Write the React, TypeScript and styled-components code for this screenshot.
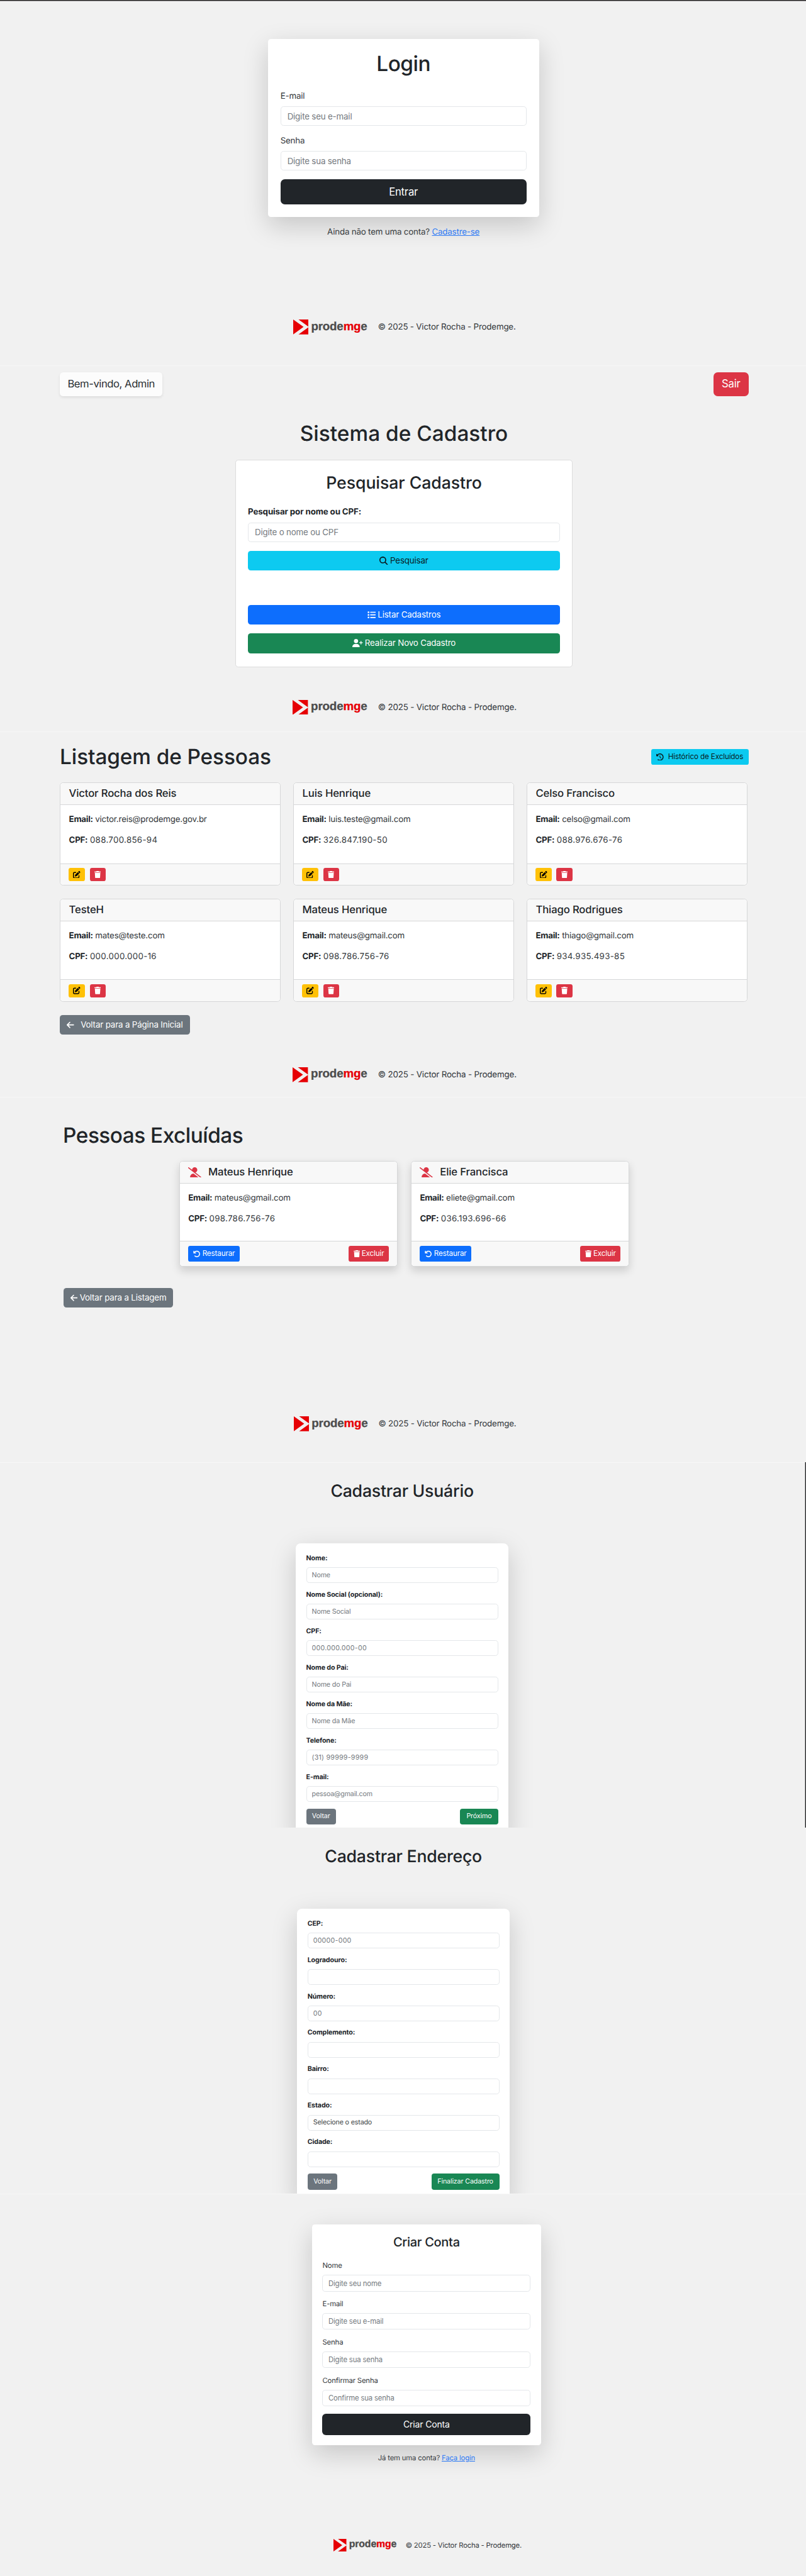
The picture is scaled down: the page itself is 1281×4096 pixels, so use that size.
import React from 'react';
import styled, { createGlobalStyle, css } from 'styled-components';
import {
  FaMagnifyingGlass,
  FaList,
  FaUserPlus,
  FaPenToSquare,
  FaTrash,
  FaArrowLeft,
  FaClockRotateLeft,
  FaArrowRotateLeft,
  FaUserSlash,
} from 'react-icons/fa6';

/* Design units to CSS pixels. */
const u = (n: number) => `${(n * 0.6674).toFixed(2)}px`;

const Global = createGlobalStyle`
  *, *::before, *::after { box-sizing: border-box; }
  body {
    margin: 0;
    background: #f1f1f1;
    color: #212529;
    font-family: Inter, "Liberation Sans", sans-serif;
    font-size: ${u(20)};
    line-height: ${u(30)};
    letter-spacing: -0.0145em;
    text-rendering: geometricPrecision;
  }
  p, h1, h2, h3 { margin: 0; }
`;

const Page = styled.main`
  width: 1281px;
  height: 4096px;
  overflow: hidden;
  background: #f1f1f1;
`;

const Screen = styled.section<{
  $height?: number;
  $top?: number;
  $left?: number;
  $right?: number;
  $seam?: boolean;
  $edge?: 'top' | 'right';
}>`
  display: flex;
  flex-direction: column;
  height: ${(p) => u(p.$height ?? 871)};
  padding: ${(p) => `${u(p.$top ?? 0)} ${u(p.$right ?? 0)} 0 ${u(p.$left ?? 0)}`};
  overflow: hidden;
  ${(p) => p.$seam && css`box-shadow: inset 0 1px 0 #f7f7f7;`}
  ${(p) => p.$edge === 'top' && css`box-shadow: inset 0 1.6px 0 #221f20;`}
  ${(p) =>
    p.$edge === 'right' &&
    css`box-shadow: inset -1.4px 0 0 #252628, inset 0 1px 0 #f7f7f7;`}
`;

const Title = styled.h1<{ $size?: number; $ls?: number; $mb?: number; $center?: boolean }>`
  font-weight: 450;
  font-size: ${(p) => u(p.$size ?? 50)};
  line-height: 1.2;
  letter-spacing: ${(p) => p.$ls ?? -0.003}em;
  margin-bottom: ${(p) => u(p.$mb ?? 0)};
  text-align: ${(p) => (p.$center ? 'center' : 'left')};
  white-space: nowrap;
`;

/* ---------- Forms ---------- */

const FormCard = styled.form<{
  $w: number;
  $h: number;
  $fs: number;
  $label: number;
  $input: number;
  $gap: number;
  $pad: string;
  $radius?: number;
  $outlined?: boolean;
}>`
  --fs: ${(p) => u(p.$fs)};
  --label: ${(p) => u(p.$label)};
  --input: ${(p) => u(p.$input)};
  --gap: ${(p) => u(p.$gap)};
  display: flex;
  flex-direction: column;
  flex: none;
  align-self: center;
  width: ${(p) => u(p.$w)};
  height: ${(p) => u(p.$h)};
  padding: ${(p) => p.$pad};
  background: #fff;
  border-radius: ${(p) => u(p.$radius ?? 7)};
  font-size: var(--fs);
  ${(p) =>
    p.$outlined
      ? css`border: 1px solid #dcdcdd;`
      : css`box-shadow: 0 ${u(20)} ${u(60)} rgba(0, 0, 0, 0.175);`}
`;

const Field = styled.div`
  display: flex;
  flex-direction: column;
  gap: ${u(9.3)};
  margin-bottom: var(--gap);
`;

const Label = styled.label<{ $bold?: boolean }>`
  height: var(--label);
  line-height: var(--label);
  font-weight: ${(p) => (p.$bold ? 700 : 400)};
  color: ${(p) => (p.$bold ? '#212529' : '#32363a')};
  letter-spacing: ${(p) => (p.$bold ? '-0.010em' : '-0.0145em')};
`;

const control = css`
  display: block;
  width: 100%;
  height: var(--input);
  margin: 0;
  padding: 0 ${u(15)};
  padding-left: 0.75em;
  background: #fff;
  border: 1px solid #e4e7ea;
  border-radius: ${u(7)};
  font: inherit;
  font-size: var(--fs);
  color: #3b3f43;
`;

const Input = styled.input<{ $digits?: boolean }>`
  ${control}
  letter-spacing: ${(p) => (p.$digits ? '0.022em' : '-0.0145em')};
  &::placeholder { color: #74797e; opacity: 1; }
`;

const Select = styled.select`
  ${control}
  appearance: none;
  letter-spacing: -0.0145em;
`;

const FormActions = styled.div`
  display: flex;
  justify-content: space-between;
`;

/* ---------- Buttons ---------- */

const tones = {
  dark: ['#212529', '#fff'],
  danger: ['#dc3545', '#fff'],
  info: ['#0dcaf0', '#0a1a1e'],
  primary: ['#0d6efd', '#fff'],
  success: ['#198754', '#fff'],
  secondary: ['#6c757d', '#fff'],
  warning: ['#ffc107', '#000'],
};

const Button = styled.button<{
  $tone: keyof typeof tones;
  $h: number;
  $w?: number;
  $fs?: number;
  $gap?: number;
  $mb?: number;
  $radius?: number;
  $icon?: number;
}>`
  display: inline-flex;
  flex: none;
  align-items: center;
  justify-content: center;
  gap: ${(p) => u(p.$gap ?? 5)};
  width: ${(p) => (p.$w ? u(p.$w) : '100%')};
  height: ${(p) => u(p.$h)};
  margin: 0 0 ${(p) => u(p.$mb ?? 0)};
  padding: 0;
  border: 0;
  border-radius: ${(p) => u(p.$radius ?? 7)};
  background: ${(p) => tones[p.$tone][0]};
  color: ${(p) => tones[p.$tone][1]};
  font-family: inherit;
  font-size: ${(p) => u(p.$fs ?? 20)};
  letter-spacing: -0.012em;
  line-height: 1;
  white-space: nowrap;
  svg { width: ${(p) => p.$icon ?? 1}em; height: 1em; flex: none; }
`;

const Hint = styled.p<{ $fs: number; $top: number }>`
  margin-top: ${(p) => u(p.$top)};
  font-size: ${(p) => u(p.$fs)};
  line-height: 1.5;
  text-align: center;
  color: #383c40;
`;

const Link = styled.a`
  color: #2f7bf5;
  text-decoration: underline;
`;

/* ---------- Footer ---------- */

const FooterBar = styled.footer<{ $left: number; $bottom: number; $scale: number }>`
  --k: ${(p) => p.$scale};
  display: flex;
  align-items: center;
  height: ${u(40)};
  margin-top: auto;
  margin-bottom: ${(p) => u(p.$bottom)};
  padding-left: ${(p) => u(p.$left)};
  white-space: nowrap;
`;

const Mark = styled.svg`
  flex: none;
  width: calc(${u(36.3)} * var(--k));
  height: calc(${u(35.4)} * var(--k));
  margin-right: calc(${u(6.8)} * var(--k));
`;

const Brand = styled.span`
  width: calc(${u(159.2)} * var(--k));
  padding-bottom: ${u(3)};
  font: 700 calc(${u(28)} * var(--k)) / 1 "Liberation Sans", sans-serif;
  letter-spacing: -0.008em;
  color: #4d4d4d;
  -webkit-text-stroke: 0.3px currentColor;
  em { font-style: normal; color: #e60005; }
`;

const Copy = styled.span`
  font-size: calc(${u(20)} * var(--k));
  color: #33373b;
`;

function Footer({ left, bottom, scale = 1 }: { left: number; bottom: number; scale?: number }) {
  return (
    <FooterBar $left={left} $bottom={bottom} $scale={scale}>
      <Mark viewBox="0 0 109 106" preserveAspectRatio="none" fill="#e60005">
        <polygon points="0,0 74,53 0,106" />
        <polygon points="38,0 109,0 109,51" />
        <polygon points="38,106 109,106 109,55" />
      </Mark>
      <Brand>prode<em>mg</em>e</Brand>
      <Copy>© 2025 - Victor Rocha - Prodemge.</Copy>
    </FooterBar>
  );
}

/* ---------- Home ---------- */

const Bar = styled.div<{ $mb: number; $h: number }>`
  display: flex;
  align-items: center;
  justify-content: space-between;
  height: ${(p) => u(p.$h)};
  margin: 0 ${u(137)} ${(p) => u(p.$mb)} ${u(142.5)};
`;

const Welcome = styled.div`
  display: flex;
  align-items: center;
  justify-content: center;
  width: ${u(244.5)};
  height: 100%;
  border-radius: ${u(8)};
  background: #fcfcfc;
  box-shadow: 0 ${u(3)} ${u(6)} rgba(0, 0, 0, 0.09);
  font-size: ${u(25)};
  letter-spacing: -0.028em;
  color: #2b2f33;
`;

const Centered = styled.div<{ $shift?: number }>`
  display: flex;
  flex-direction: column;
  padding-left: ${(p) => u(p.$shift ?? 0)};
`;

/* ---------- People ---------- */

const Cards = styled.div<{ $cols: number; $w: number; $left: number; $gapX: number; $gapY: number; $h: number }>`
  display: grid;
  grid-template-columns: repeat(${(p) => p.$cols}, ${(p) => u(p.$w)});
  grid-auto-rows: ${(p) => u(p.$h)};
  column-gap: ${(p) => u(p.$gapX)};
  row-gap: ${(p) => u(p.$gapY)};
  margin-left: ${(p) => u(p.$left)};
`;

const Card = styled.article<{ $raised?: boolean }>`
  display: flex;
  flex-direction: column;
  border: 1px solid #d6d7d8;
  border-radius: ${u(8)};
  background: #fff;
  overflow: hidden;
  ${(p) => p.$raised && css`box-shadow: 0 ${u(10)} ${u(20)} rgba(0, 0, 0, 0.15);`}
`;

const CardHead = styled.h3`
  display: flex;
  align-items: center;
  gap: ${u(16.5)};
  height: ${u(51.5)};
  padding: 0 ${u(19.8)};
  border-bottom: 1px solid #d6d7d8;
  background: #f8f8f8;
  font-weight: 450;
  font-size: ${u(25)};
  letter-spacing: -0.008em;
  svg { flex: none; width: 1.25em; height: 1em; color: #dc3545; }
`;

const CardBody = styled.div`
  display: flex;
  flex: 1;
  flex-direction: column;
  gap: ${u(20)};
  padding: ${u(20)} ${u(19.8)} 0;
  color: #33373b;
  b { color: #212529; letter-spacing: -0.02em; }
`;

const Digits = styled.span`
  letter-spacing: 0.022em;
`;

const CardFoot = styled.div<{ $h: number; $spread?: boolean }>`
  display: flex;
  align-items: center;
  justify-content: ${(p) => (p.$spread ? 'space-between' : 'flex-start')};
  gap: ${u(11)};
  height: ${(p) => u(p.$h)};
  padding: 0 ${u(19.5)};
  border-top: 1px solid #d6d7d8;
  background: #f8f8f8;
`;

const BackRow = styled.div<{ $left: number; $top: number }>`
  margin: ${(p) => `${u(p.$top)} 0 0 ${u(p.$left)}`};
`;

const people = [
  ['Victor Rocha dos Reis', 'victor.reis@prodemge.gov.br', '088.700.856-94'],
  ['Luis Henrique', 'luis.teste@gmail.com', '326.847.190-50'],
  ['Celso Francisco', 'celso@gmail.com', '088.976.676-76'],
  ['TesteH', 'mates@teste.com', '000.000.000-16'],
  ['Mateus Henrique', 'mateus@gmail.com', '098.786.756-76'],
  ['Thiago Rodrigues', 'thiago@gmail.com', '934.935.493-85'],
];

const removed = [
  ['Mateus Henrique', 'mateus@gmail.com', '098.786.756-76'],
  ['Elie Francisca', 'eliete@gmail.com', '036.193.696-66'],
];

const userFields: [string, string, boolean?][] = [
  ['Nome:', 'Nome'],
  ['Nome Social (opcional):', 'Nome Social'],
  ['CPF:', '000.000.000-00', true],
  ['Nome do Pai:', 'Nome do Pai'],
  ['Nome da Mãe:', 'Nome da Mãe'],
  ['Telefone:', '(31) 99999-9999', true],
  ['E-mail:', 'pessoa@gmail.com'],
];

const addressFields: [string, string, boolean?][] = [
  ['CEP:', '00000-000', true],
  ['Logradouro:', ''],
  ['Número:', '00', true],
  ['Complemento:', ''],
  ['Bairro:', ''],
  ['Estado:', 'Selecione o estado'],
  ['Cidade:', ''],
];

const accountFields = [
  ['Nome', 'Digite seu nome'],
  ['E-mail', 'Digite seu e-mail'],
  ['Senha', 'Digite sua senha'],
  ['Confirmar Senha', 'Confirme sua senha'],
];

function PersonInfo({ email, cpf }: { email: string; cpf: string }) {
  return (
    <CardBody>
      <p><b>Email:</b> {email}</p>
      <p><b>CPF:</b> <Digits>{cpf}</Digits></p>
    </CardBody>
  );
}

export default function App() {
  return (
    <Page>
      <Global />

      <Screen $top={93} $left={2} $edge="top">
        <FormCard $w={645.5} $h={424} $fs={20} $label={30} $input={47} $gap={20.5} $pad={`${u(30)} ${u(29.8)}`}>
          <Title $center $mb={30.7} $ls={-0.014}>Login</Title>
          <Field>
            <Label>E-mail</Label>
            <Input placeholder="Digite seu e-mail" />
          </Field>
          <Field>
            <Label>Senha</Label>
            <Input placeholder="Digite sua senha" />
          </Field>
          <Button type="button" $tone="dark" $h={60} $fs={25} $radius={10}>Entrar</Button>
        </FormCard>
        <Hint $fs={20} $top={21}>Ainda não tem uma conta? <Link>Cadastre-se</Link></Hint>
        <Footer left={695.8} bottom={72} />
      </Screen>

      <Screen $top={15.3} $seam>
        <Bar $h={57} $mb={61}>
          <Welcome>Bem-vindo, Admin</Welcome>
          <Button $tone="danger" $w={83} $h={57} $fs={25} $radius={10}>Sair</Button>
        </Bar>
        <Centered $shift={4.5}>
          <Title $center $mb={30.7} $ls={0.001}>Sistema de Cadastro</Title>
          <FormCard $outlined $w={803} $h={494.5} $fs={20} $label={30} $input={47} $gap={20.5} $pad={`${u(30)} ${u(28.5)}`}>
            <Title as="h2" $size={40} $center $mb={30.7}>Pesquisar Cadastro</Title>
            <Field>
              <Label $bold>Pesquisar por nome ou CPF:</Label>
              <Input placeholder="Digite o nome ou CPF" />
            </Field>
            <Button type="button" $tone="info" $h={47.4} $mb={81.6}><FaMagnifyingGlass /> Pesquisar</Button>
            <Button type="button" $tone="primary" $h={47.4} $mb={20.6}><FaList /> Listar Cadastros</Button>
            <Button type="button" $tone="success" $h={47.4} $icon={1.25}><FaUserPlus /> Realizar Novo Cadastro</Button>
          </FormCard>
        </Centered>
        <Footer left={697} bottom={37} scale={1.005} />
      </Screen>

      <Screen $top={31.5} $seam>
        <Bar $h={60} $mb={31}>
          <Title>Listagem de Pessoas</Title>
          <Button $tone="info" $w={231.5} $h={38.4} $fs={17.5} $gap={10} $radius={5}>
            <FaClockRotateLeft /> Histórico de Excluídos
          </Button>
        </Bar>
        <Cards $cols={3} $w={525.3} $left={142.9} $gapX={30.5} $gapY={31.3} $h={245.7}>
          {people.map(([name, email, cpf]) => (
            <Card key={name}>
              <CardHead>{name}</CardHead>
              <PersonInfo email={email} cpf={cpf} />
              <CardFoot $h={52}>
                <Button $tone="warning" $w={38.8} $h={30.7} $fs={17.5} $radius={5} aria-label="Editar"><FaPenToSquare /></Button>
                <Button $tone="danger" $w={37.6} $h={30.7} $fs={17.5} $radius={5} $icon={0.875} aria-label="Remover"><FaTrash /></Button>
              </CardFoot>
            </Card>
          ))}
        </Cards>
        <BackRow $left={142.9} $top={30.7}>
          <Button $tone="secondary" $w={309} $h={47.7} $gap={15} $icon={0.875}><FaArrowLeft /> Voltar para a Página Inicial</Button>
        </BackRow>
        <Footer left={697} bottom={32.5} scale={1.005} />
      </Screen>

      <Screen $top={62.5} $seam>
        <BackRow $left={150} $top={0}>
          <Title $mb={31} $ls={-0.015}>Pessoas Excluídas</Title>
        </BackRow>
        <Cards $cols={2} $w={520} $left={427} $gapX={31.7} $gapY={0} $h={251}>
          {removed.map(([name, email, cpf]) => (
            <Card key={name} $raised>
              <CardHead><FaUserSlash /> {name}</CardHead>
              <PersonInfo email={email} cpf={cpf} />
              <CardFoot $h={59} $spread>
                <Button $tone="primary" $w={123} $h={38} $fs={17.5} $radius={5}><FaArrowRotateLeft /> Restaurar</Button>
                <Button $tone="danger" $w={95.5} $h={38} $fs={17.5} $radius={5} $gap={4} $icon={0.875}><FaTrash /> Excluir</Button>
              </CardFoot>
            </Card>
          ))}
        </Cards>
        <BackRow $left={150.8} $top={51}>
          <Button $tone="secondary" $w={262} $h={47} $icon={0.875}><FaArrowLeft /> Voltar para a Listagem</Button>
        </BackRow>
        <Footer left={699} bottom={71.5} />
      </Screen>

      <Screen $top={44.4} $right={4.3} $seam $edge="right">
        <Title $size={40} $center $mb={100.3} $ls={-0.009}>Cadastrar Usuário</Title>
        <FormCard $w={505.3} $h={700} $fs={16} $label={24} $input={37.5} $gap={16.2} $radius={12} $pad={`${u(24)} ${u(24.1)}`}>
          {userFields.map(([label, hint, digits]) => (
            <Field key={label}>
              <Label $bold>{label}</Label>
              <Input placeholder={hint} $digits={digits} />
            </Field>
          ))}
          <FormActions>
            <Button type="button" $tone="secondary" $w={71} $h={38} $fs={16} $radius={6}>Voltar</Button>
            <Button type="button" $tone="success" $w={90.5} $h={38} $fs={16} $radius={6}>Próximo</Button>
          </FormActions>
        </FormCard>
      </Screen>

      <Screen $top={44.4} $left={2}>
        <Title $size={40} $center $mb={99.5} $ls={-0.009}>Cadastrar Endereço</Title>
        <FormCard $w={505.9} $h={700} $fs={16} $label={24} $input={37.8} $gap={15.8} $radius={12} $pad={`${u(24)} ${u(24.5)}`}>
          {addressFields.map(([label, hint, digits]) => (
            <Field key={label}>
              <Label $bold>{label}</Label>
              {label === 'Estado:' ? (
                <Select><option>{hint}</option></Select>
              ) : (
                <Input placeholder={hint} $digits={digits} />
              )}
            </Field>
          ))}
          <FormActions>
            <Button type="button" $tone="secondary" $w={71.4} $h={38} $fs={16} $radius={6}>Voltar</Button>
            <Button type="button" $tone="success" $w={162} $h={38} $fs={16} $radius={6}>Finalizar Cadastro</Button>
          </FormActions>
        </FormCard>
      </Screen>

      <Screen $top={73} $height={911} $left={112} $seam>
        <FormCard $w={546} $h={526.8} $fs={17} $label={25.5} $input={39.2} $gap={17.2} $pad={`${u(24)} ${u(25.2)}`}>
          <Title as="h2" $size={30} $center $mb={26.5} $ls={-0.016}>Criar Conta</Title>
          {accountFields.map(([label, hint]) => (
            <Field key={label}>
              <Label>{label}</Label>
              <Input placeholder={hint} />
            </Field>
          ))}
          <Button type="button" $tone="dark" $h={51} $fs={21} $radius={9}>Criar Conta</Button>
        </FormCard>
        <Hint $fs={17} $top={17.2}>Já tem uma conta? <Link>Faça login</Link></Hint>
        <Footer left={682.7} bottom={53.4} scale={0.847} />
      </Screen>
    </Page>
  );
}
